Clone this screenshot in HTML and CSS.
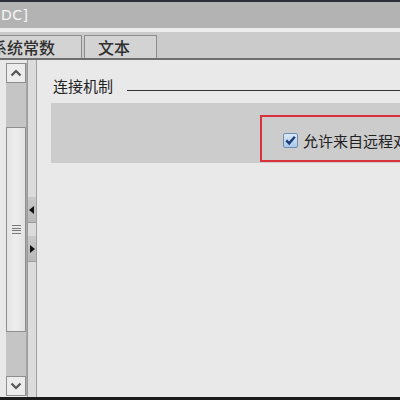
FILE: index.html
```html
<!DOCTYPE html>
<html>
<head>
<meta charset="utf-8">
<link rel="stylesheet" href="styles.css">
</head>
<body>
<div class="page">
  <div class="titlebar"><span class="title">[DC]</span></div>
  <div class="strip"></div>
  <div class="tabbar">
    <div class="tab first">系统常数</div>
    <div class="tab">文本</div>
  </div>
  <div class="main">
    <div class="scrollbar">
      <div class="sbtn">
        <svg width="12" height="8" viewBox="0 0 12 8"><path d="M1.5 6.5 L6 2 L10.5 6.5" fill="none" stroke="#555" stroke-width="2.2"/></svg>
      </div>
      <div class="track"></div>
      <div class="thumb">
        <div class="grip"></div>
      </div>
      <div class="track"></div>
      <div class="sbtn">
        <svg width="12" height="8" viewBox="0 0 12 8"><path d="M1.5 1.5 L6 6 L10.5 1.5" fill="none" stroke="#555" stroke-width="2.2"/></svg>
      </div>
    </div>
    <div class="splitter">
      <div class="sp-btn"><svg width="6" height="8" viewBox="0 0 6 8"><path d="M5 0 L0 4 L5 8 Z" fill="#111"/></svg></div>
      <div class="sp-btn"><svg width="6" height="8" viewBox="0 0 6 8"><path d="M1 0 L6 4 L1 8 Z" fill="#111"/></svg></div>
    </div>
    <div class="content">
      <div class="section-head">
        <span class="section-title">连接机制</span>
        <span class="section-line"></span>
      </div>
      <div class="panel">
        <div class="highlight">
          <span class="checkbox">
            <svg width="15" height="15" viewBox="0 0 15 15">
              <defs>
                <linearGradient id="cb" x1="0" y1="0" x2="0" y2="1">
                  <stop offset="0" stop-color="#dbeaf7"/>
                  <stop offset="1" stop-color="#a9c8e6"/>
                </linearGradient>
              </defs>
              <rect x="0.5" y="0.5" width="14" height="14" rx="1.5" fill="url(#cb)" stroke="#6d8fb3"/>
              <path d="M3.3 7.4 L6.2 10.4 L11.8 3.8" fill="none" stroke="#1d3e7a" stroke-width="2.4"/>
            </svg>
          </span>
          <span class="cb-label">允许来自远程对象的访问</span>
        </div>
      </div>
    </div>
  </div>
</div>
</body>
</html>
```
FILE: styles.css
```css
html, body {
  margin: 0;
  padding: 0;
  width: 400px;
  height: 400px;
  overflow: hidden;
  background: #e9e9e9;
}
.page {
  width: 400px;
  height: 400px;
  display: flex;
  flex-direction: column;
  font-family: "Noto Sans CJK SC", "Noto Sans", sans-serif;
  overflow: hidden;
}
.titlebar {
  height: 26px;
  border-top: 2px solid #2e3039;
  background: #b3b3b3;
  display: flex;
  align-items: center;
  flex: none;
}
.title {
  margin-left: -5px;
  color: #f6f6f6;
  font-family: "DejaVu Sans", sans-serif;
  font-size: 14px;
  letter-spacing: 0.5px;
}
.strip {
  height: 4px;
  background: #ededed;
  flex: none;
}
.tabbar {
  height: 26px;
  background: #cbcbcb;
  border-bottom: 2px solid #6e6e6e;
  display: flex;
  align-items: flex-end;
  flex: none;
}
.tab {
  height: 22px;
  border: 1px solid #8d8d8d;
  border-bottom: none;
  background: #d3d3d3;
  color: #2f2f2f;
  font-size: 16px;
  line-height: 22px;
  padding: 0 26px 0 13px;
  margin-right: 2px;
  font-weight: 500;
}
.tab.first {
  margin-left: -23px;
}
.main {
  flex: 1;
  display: flex;
  border-bottom: 3px solid #1c1c1c;
  min-height: 0;
}
.scrollbar {
  margin: 3px 0 1px 6px;
  width: 20px;
  display: flex;
  flex-direction: column;
  background: #c5c5c5;
  border-right: 1px solid #a8a8a8;
  flex: none;
}
.sbtn {
  height: 18px;
  border: 1px solid #8f8f8f;
  background: #ececec;
  display: flex;
  align-items: center;
  justify-content: center;
  flex: none;
}
.track {
  height: 44px;
  flex: none;
}
.thumb {
  flex: 1;
  border: 1px solid #8f8f8f;
  background: linear-gradient(to right, #e4e4e4, #eeeeee 50%, #e2e2e2);
  display: flex;
  align-items: center;
  justify-content: center;
}
.grip {
  width: 9px;
  height: 7px;
  border-top: 1px solid #7a7a7a;
  border-bottom: 1px solid #7a7a7a;
  background: linear-gradient(#e8e8e8 0 2px, #7a7a7a 2px 3px, #e8e8e8 3px 4px, #7a7a7a 4px 5px, #e8e8e8 5px);
}
.splitter {
  width: 8px;
  border-left: 1px solid #9a9a9a;
  border-right: 1px solid #a0a0a0;
  background: #dcdcdc;
  display: flex;
  flex-direction: column;
  padding-top: 137px;
  gap: 13px;
  flex: none;
}
.sp-btn {
  height: 25px;
  background: linear-gradient(#c9c9c9, #b9b9b9);
  border-bottom: 1px solid #9a9a9a;
  display: flex;
  align-items: center;
  justify-content: center;
}
.content {
  flex: 1;
  min-width: 0;
  overflow: hidden;
}
.section-head {
  margin: 15px 0 0 16px;
  display: flex;
  align-items: center;
  height: 22px;
}
.section-title {
  font-size: 15px;
  color: #222;
  line-height: 22px;
  white-space: nowrap;
}
.section-line {
  flex: 1;
  height: 0;
  border-top: 1.5px solid #333;
  margin: 8px 0 0 14px;
}
.panel {
  margin: 6px 0 0 14px;
  width: 400px;
  height: 60px;
  background: #cccccc;
  padding-top: 12px;
  box-sizing: border-box;
}
.highlight {
  margin-left: 209px;
  width: 200px;
  height: 47px;
  box-sizing: border-box;
  border: 2px solid #d9323f;
  display: flex;
  align-items: center;
  padding: 4px 0 0 21px;
  white-space: nowrap;
}
.checkbox {
  width: 15px;
  height: 15px;
  display: flex;
  flex: none;
}
.cb-label {
  margin-left: 5px;
  font-size: 15px;
  color: #222;
}
```
